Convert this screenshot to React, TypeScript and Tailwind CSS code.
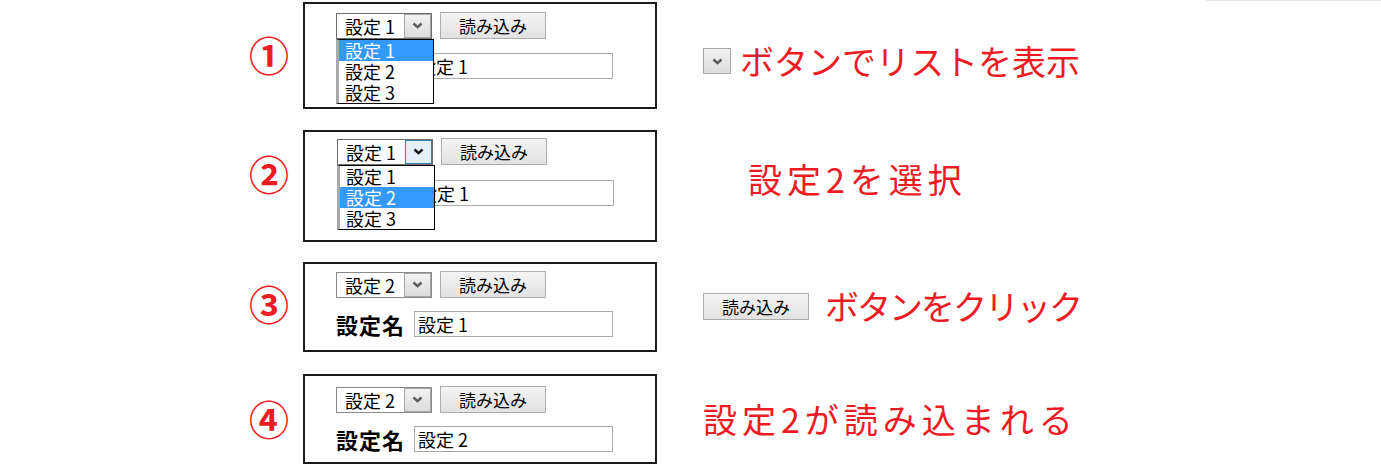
import React from 'react';

// Chevron used in the dropdown arrow part of a select
const Chevron: React.FC<{ dark?: boolean }> = ({ dark }) => (
  <svg width="11" height="7" viewBox="0 0 11 7">
    <path d="M1.5 1.5 L5.5 5.2 L9.5 1.5" fill="none" stroke={dark ? '#111' : '#5a5a5a'} strokeWidth="2.4" />
  </svg>
);

const ArrowBox: React.FC<{ hover?: boolean; className?: string }> = ({ hover, className = '' }) => (
  <div
    className={`flex items-center justify-center border ${
      hover ? 'border-[#3c7fb1] bg-[#e3f0fb]' : 'border-[#a6a6a6] bg-gradient-to-b from-[#f2f2f2] to-[#dcdcdc]'
    } ${className}`}
  >
    <Chevron dark={hover} />
  </div>
);

interface SelectProps {
  value: string;
  open?: boolean;
  hover?: boolean;
  selected?: number;
}

const options = ['設定 1', '設定 2', '設定 3'];

const SelectBox: React.FC<SelectProps> = ({ value, open, hover, selected = 0 }) => (
  <div className="relative">
    <div className={`flex h-[26px] w-[96px] border ${open ? 'border-[#6e6e6e]' : 'border-[#8a8a8a]'} bg-white`}>
      <div className="flex flex-1 items-center pl-[8px] text-[18px] leading-none text-black">{value}</div>
      <ArrowBox hover={hover} className="h-full w-[27px]" />
    </div>
    {open && (
      <div className="absolute left-0 top-full z-10 w-[98px] border border-black border-l-[3px] border-l-[#a8a8a8] bg-white">
        {options.map((o, i) => (
          <div
            key={o}
            className={`flex h-[21px] items-center pl-[6px] text-[18px] leading-none ${
              i === selected ? 'bg-[#3399ff] text-white' : 'text-black'
            }`}
          >
            {o}
          </div>
        ))}
      </div>
    )}
  </div>
);

const LoadButton: React.FC<{ className?: string }> = ({ className = '' }) => (
  <div
    className={`flex h-[27px] w-[106px] items-center justify-center border border-[#adadad] bg-gradient-to-b from-[#f4f4f4] to-[#e2e2e2] text-[17px] leading-none text-black ${className}`}
  >
    読み込み
  </div>
);

interface PanelProps {
  height: string;
  top: string;
  rowGap: string;
  value: string;
  name: string;
  open?: boolean;
  hover?: boolean;
  selected?: number;
  indent?: string;
}

const Panel: React.FC<PanelProps> = ({ height, top, rowGap, value, name, open, hover, selected, indent = 'pl-[31px]' }) => (
  <div className={`w-[354px] shrink-0 border-2 border-[#1a1a1a] bg-white ${height} ${top} ${indent}`}>
    <div className="flex items-center gap-[8px]">
      <SelectBox value={value} open={open} hover={hover} selected={selected} />
      <LoadButton />
    </div>
    <div className={`flex items-center gap-[9px] ${rowGap}`}>
      <span className="text-[22px] font-bold leading-none tracking-[1px] text-black">設定名</span>
      <div className="flex h-[26px] w-[199px] items-center border border-[#a9a9a9] pl-[3px] text-[18px] leading-none text-black">
        {name}
      </div>
    </div>
  </div>
);

const Circled: React.FC<{ n: string; mt: string }> = ({ n, mt }) => (
  <div className={`flex w-[303px] shrink-0 justify-end pr-[14px] ${mt}`}>
    <span className="text-[40px] font-bold leading-none text-[#ed1c24]">{n}</span>
  </div>
);

const caption = 'text-[34px] leading-none text-[#ed1c24]';

export default function App() {
  return (
    <div className="relative h-[471px] w-[1381px] overflow-hidden bg-white font-['Noto_Sans_CJK_JP',sans-serif]">
      <div className="absolute right-0 top-0 h-px w-[175px] bg-[#e8e8e8]" />

      <div className="flex flex-col pt-[2px]">
        {/* 1 */}
        <div className="flex items-start">
          <Circled n="①" mt="mt-[32px]" />
          <Panel height="h-[107px]" top="pt-[8px]" rowGap="mt-[14px]" value="設定 1" name="設定 1" open selected={0} />
          <div className="ml-[46px] mt-[42px] flex items-center gap-[9px]">
            <ArrowBox className="h-[26px] w-[28px]" />
            <span className={caption}>ボタンでリストを表示</span>
          </div>
        </div>

        {/* 2 */}
        <div className="mt-[21px] flex items-start">
          <Circled n="②" mt="mt-[23px]" />
          <Panel height="h-[112px]" top="pt-[6px]" rowGap="mt-[15px]" value="設定 1" name="設定 1" open hover selected={1} indent="pl-[32px]" />
          <div className="ml-[91px] mt-[32px] flex items-center">
            <span className={`${caption} tracking-[5px]`}>設定2を選択</span>
          </div>
        </div>

        {/* 3 */}
        <div className="mt-[20px] flex items-start">
          <Circled n="③" mt="mt-[21px]" />
          <Panel height="h-[90px]" top="pt-[7px]" rowGap="mt-[13px]" value="設定 2" name="設定 1" />
          <div className="ml-[46px] mt-[27px] flex items-center gap-[16px]">
            <LoadButton className="h-[26px]" />
            <span className={`${caption} tracking-[-2px]`}>ボタンをクリック</span>
          </div>
        </div>

        {/* 4 */}
        <div className="mt-[22px] flex items-start">
          <Circled n="④" mt="mt-[24px]" />
          <Panel height="h-[90px]" top="pt-[10px]" rowGap="mt-[13px]" value="設定 2" name="設定 2" />
          <div className="ml-[46px] mt-[28px] flex items-center">
            <span className={`${caption} tracking-[5px]`}>設定2が読み込まれる</span>
          </div>
        </div>
      </div>
    </div>
  );
}
